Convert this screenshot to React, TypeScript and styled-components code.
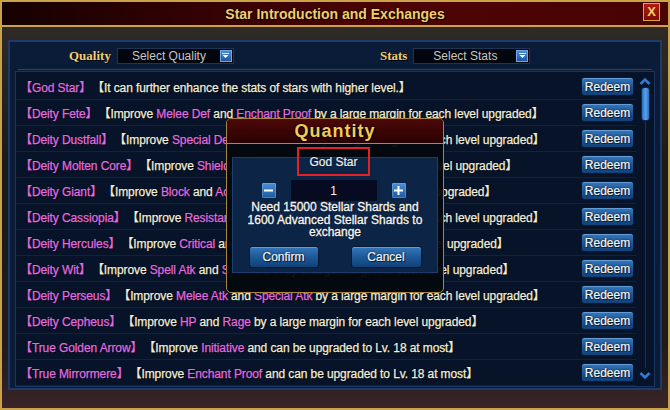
import styled, { createGlobalStyle } from "styled-components";

const GlobalStyle = createGlobalStyle`
  html, body {
    margin: 0;
    padding: 0;
    background: #000;
  }
  body {
    font-family: "Liberation Sans", "Noto Sans CJK SC", sans-serif;
  }
  * {
    box-sizing: border-box;
  }
`;

const gold = "#c9a24a";

const Window = styled.div`
  position: relative;
  width: 670px;
  height: 410px;
  border: 2px solid ${gold};
  display: flex;
  flex-direction: column;
  overflow: hidden;
  background: linear-gradient(
    to bottom,
    #45403a 0%,
    #2f2a26 6%,
    #1c1917 40%,
    #221a1a 85%,
    #3a2428 100%
  );
`;

const TitleBar = styled.header`
  flex: none;
  height: 25px;
  display: grid;
  grid-template-columns: 1fr auto 1fr;
  align-items: center;
  border-bottom: 2px solid ${gold};
  background: linear-gradient(
    to right,
    #160101 0%,
    #340202 30%,
    #4e0404 60%,
    #480303 100%
  );
`;

const Title = styled.h1`
  grid-column: 2;
  margin: 0;
  font-size: 14px;
  font-weight: bold;
  color: #f3cc68;
  text-shadow: 1px 1px 0 #000, 0 0 2px #000;
`;

const CloseButton = styled.button`
  grid-column: 3;
  justify-self: end;
  margin-right: 8px;
  margin-top: -3px;
  width: 17px;
  height: 18px;
  padding: 0;
  border: 1px solid #d9a843;
  background: linear-gradient(to bottom, #b41c10, #7c0b06);
  color: #f4d25e;
  font-family: "Liberation Sans", sans-serif;
  font-size: 13px;
  font-weight: bold;
  line-height: 16px;
`;

const Body = styled.main`
  flex: 1;
  min-height: 0;
  padding: 13px 6px 18px;
`;

const Panel = styled.section`
  height: 100%;
  display: flex;
  flex-direction: column;
  padding: 0 5px 1px;
  border: 2px solid #1c3b68;
  background: #0b1c38;
`;

const FilterRow = styled.div`
  flex: none;
  height: 28px;
  margin: 0 3px;
  padding-left: 51px;
  display: flex;
  align-items: center;
  border-bottom: 1px solid #23467a;
`;

const FilterLabel = styled.span<{ $gap?: number }>`
  margin-left: ${(p) => p.$gap ?? 0}px;
  font-family: "Liberation Serif", serif;
  font-size: 13px;
  font-weight: bold;
  color: #f2cd6e;
  text-shadow: 1px 1px 0 #000;
`;

const Select = styled.div`
  margin-left: 6px;
  width: 117px;
  height: 16px;
  display: flex;
  align-items: center;
  padding-right: 1px;
  border: 1px solid #1f3354;
  background: #03060c;
`;

const SelectText = styled.span`
  flex: 1;
  text-align: center;
  font-size: 12px;
  color: #c6c6c6;
`;

const DropArrow = styled.span`
  width: 12px;
  height: 12px;
  display: flex;
  align-items: center;
  justify-content: center;
  border: 1px solid #6fa6e4;
  background: linear-gradient(to bottom, #4a8ad4, #1b56a2);
`;

const List = styled.div`
  flex: 1;
  min-height: 0;
  margin-top: 1px;
  padding-top: 2px;
  display: flex;
  border: 1px solid #1a3560;
  background: #061329;
`;

const Rows = styled.ul`
  flex: 1;
  margin: 0;
  padding: 0;
  list-style: none;
  display: flex;
  flex-direction: column;
  overflow: hidden;
`;

const Row = styled.li`
  flex: none;
  height: 26px;
  display: flex;
  align-items: center;
  padding: 0 2px 0 4px;
  border-bottom: 1px solid #0e2343;
`;

const RowText = styled.span`
  flex: 1;
  min-width: 0;
  overflow: hidden;
  white-space: nowrap;
  font-size: 12px;
  letter-spacing: -0.1px;
  color: #f2eedc;
  -webkit-text-stroke: 0.25px currentColor;
  text-shadow: 0 0 1px #000, 1px 1px 0 rgba(0, 0, 0, 0.6);
`;

const Pink = styled.span`
  color: #e26ce0;
`;

const StarName = styled(Pink)`
  margin-right: 7px;
`;

const BlueButton = styled.button<{ $w: number; $h: number }>`
  flex: none;
  width: ${(p) => p.$w}px;
  height: ${(p) => p.$h}px;
  padding: 0;
  border: 1px solid #061a36;
  border-radius: 3px;
  background: linear-gradient(to bottom, #3677bb 0%, #1f5c9c 45%, #114178 100%);
  box-shadow: inset 0 1px 0 rgba(160, 205, 255, 0.45);
  color: #f4f6fa;
  font-family: "Liberation Sans", sans-serif;
  font-size: 12px;
  line-height: 1;
  -webkit-text-stroke: 0.2px #f4f6fa;
  text-shadow: 1px 1px 0 #0a1a30, 0 0 2px #000;
`;

const Scrollbar = styled.div`
  flex: none;
  width: 18px;
  display: flex;
  flex-direction: column;
  align-items: center;
  padding: 3px 0 6px;
`;

const Thumb = styled.div`
  margin-top: 2px;
  width: 9px;
  height: 34px;
  border-radius: 3px;
  border: 1px solid #0b2a55;
  background: linear-gradient(to right, #2a6fc0, #5aa2ec 50%, #2a6fc0);
`;

const Track = styled.div`
  flex: 1;
  width: 1px;
  margin: 0 0 4px;
  background: #17345e;
`;

const Modal = styled.div`
  position: absolute;
  left: 224px;
  top: 116px;
  width: 218px;
  height: 175px;
  display: flex;
  flex-direction: column;
  border: 1px solid #a98640;
  border-radius: 5px;
  background: rgba(4, 7, 14, 0.95);
  overflow: hidden;
`;

const ModalTitle = styled.div`
  flex: none;
  height: 25px;
  display: flex;
  align-items: center;
  justify-content: center;
  border-bottom: 1px solid #b08a3e;
  background: linear-gradient(to bottom, #4c0808, #2a0101);
  font-size: 18px;
  font-weight: bold;
  letter-spacing: 1px;
  color: #f4cb52;
  text-shadow: 1px 1px 0 #000, 0 0 2px #000;
`;

const ModalPanel = styled.div`
  margin: 13px 5px 0;
  height: 116px;
  display: flex;
  flex-direction: column;
  align-items: center;
  border: 1px solid #1d3d6a;
  background: #0c2446;
`;

const NameBox = styled.div`
  margin-top: -11px;
  margin-left: -3px;
  width: 73px;
  height: 29px;
  display: flex;
  align-items: center;
  justify-content: center;
  border: 2px solid #e32323;
  font-size: 12px;
  color: #eef0f4;
  -webkit-text-stroke: 0.2px #eef0f4;
  text-shadow: 0 0 1px #000;
`;

const Stepper = styled.div`
  margin-top: 4px;
  margin-left: -3px;
  height: 21px;
  display: flex;
  align-items: center;
  gap: 14px;
`;

const StepButton = styled.button`
  width: 16px;
  height: 17px;
  padding: 0;
  display: flex;
  align-items: center;
  justify-content: center;
  border: 1px solid #0a2242;
  border-radius: 2px;
  background: linear-gradient(to bottom, #4b8fd6, #1d5aa0);
  box-shadow: inset 0 0 0 1px rgba(150, 200, 255, 0.35);
`;

const Amount = styled.div`
  width: 86px;
  height: 21px;
  display: flex;
  align-items: center;
  justify-content: center;
  background: #060b22;
  font-size: 12px;
  color: #f4f4f4;
`;

const Need = styled.p`
  margin: 0;
  width: 190px;
  text-align: center;
  font-size: 12px;
  line-height: 12.7px;
  color: #f4f4f4;
  -webkit-text-stroke: 0.35px #f4f4f4;
  text-shadow: 0 0 1px #000, 0 0 1px #000;
`;

const ModalActions = styled.div`
  margin-top: 7px;
  display: flex;
  gap: 32px;
`;

function Chevron({ up }: { up?: boolean }) {
  return (
    <svg width="12" height="8" viewBox="0 0 12 8">
      <polyline
        points={up ? "1.5,7 6,2.5 10.5,7" : "1.5,1 6,5.5 10.5,1"}
        fill="none"
        stroke="#2f7ad2"
        strokeWidth="2.6"
      />
    </svg>
  );
}

function SelectBox({ text }: { text: string }) {
  return (
    <Select>
      <SelectText>{text}</SelectText>
      <DropArrow>
        <svg width="7" height="5" viewBox="0 0 7 5">
          <rect x="0" y="0" width="7" height="1" fill="#dcecff" />
          <polygon points="0.5,2 6.5,2 3.5,5" fill="#ffffff" />
        </svg>
      </DropArrow>
    </Select>
  );
}

const rows: { name: string; desc: string }[] = [
  { name: "God Star", desc: "It can further enhance the stats of stars with higher level." },
  { name: "Deity Fete", desc: "Improve |Melee Def| and |Enchant Proof| by a large margin for each level upgraded" },
  { name: "Deity Dustfall", desc: "Improve |Special Def| and |Melee Def| by a large margin for each level upgraded" },
  { name: "Deity Molten Core", desc: "Improve |Shield| and |Block| by a large margin for each level upgraded" },
  { name: "Deity Giant", desc: "Improve |Block| and |Accuracy| by a large margin for each level upgraded" },
  { name: "Deity Cassiopia", desc: "Improve |Resistance| and |Tenacity| by a large margin for each level upgraded" },
  { name: "Deity Hercules", desc: "Improve |Critical| and |Dodge| by a large margin for each level upgraded" },
  { name: "Deity Wit", desc: "Improve |Spell Atk| and |Special Def| by a large margin for each level upgraded" },
  { name: "Deity Perseus", desc: "Improve |Melee Atk| and |Special Atk| by a large margin for each level upgraded" },
  { name: "Deity Cepheus", desc: "Improve |HP| and |Rage| by a large margin for each level upgraded" },
  { name: "True Golden Arrow", desc: "Improve |Initiative| and can be upgraded to Lv. 18 at most" },
  { name: "True Mirrormere", desc: "Improve |Enchant Proof| and can be upgraded to Lv. 18 at most" },
];

function Description({ text }: { text: string }) {
  return (
    <>
      【
      {text.split("|").map((part, i) =>
        i % 2 ? <Pink key={i}>{part}</Pink> : <span key={i}>{part}</span>
      )}
      】
    </>
  );
}

export default function App() {
  return (
    <>
      <GlobalStyle />
      <Window>
        <TitleBar>
          <Title>Star Introduction and Exchanges</Title>
          <CloseButton>X</CloseButton>
        </TitleBar>
        <Body>
          <Panel>
            <FilterRow>
              <FilterLabel>Quality</FilterLabel>
              <SelectBox text="Select Quality" />
              <FilterLabel $gap={146}>Stats</FilterLabel>
              <SelectBox text="Select Stats" />
            </FilterRow>
            <List>
              <Rows>
                {rows.map((r) => (
                  <Row key={r.name}>
                    <RowText>
                      <StarName>【{r.name}】</StarName>
                      <Description text={r.desc} />
                    </RowText>
                    <BlueButton $w={53} $h={19}>
                      Redeem
                    </BlueButton>
                  </Row>
                ))}
              </Rows>
              <Scrollbar>
                <Chevron up />
                <Thumb />
                <Track />
                <Chevron />
              </Scrollbar>
            </List>
          </Panel>
        </Body>

        <Modal>
          <ModalTitle>Quantity</ModalTitle>
          <ModalPanel>
            <NameBox>God Star</NameBox>
            <Stepper>
              <StepButton>
                <svg width="9" height="9" viewBox="0 0 9 9">
                  <rect x="0" y="3.5" width="9" height="2" fill="#fff" />
                </svg>
              </StepButton>
              <Amount>1</Amount>
              <StepButton>
                <svg width="9" height="9" viewBox="0 0 9 9">
                  <rect x="0" y="3.5" width="9" height="2" fill="#fff" />
                  <rect x="3.5" y="0" width="2" height="9" fill="#fff" />
                </svg>
              </StepButton>
            </Stepper>
            <Need>
              Need 15000 Stellar Shards and 1600 Advanced Stellar Shards to
              exchange
            </Need>
            <ModalActions>
              <BlueButton $w={70} $h={22}>Confirm</BlueButton>
              <BlueButton $w={71} $h={22}>Cancel</BlueButton>
            </ModalActions>
          </ModalPanel>
        </Modal>
      </Window>
    </>
  );
}
